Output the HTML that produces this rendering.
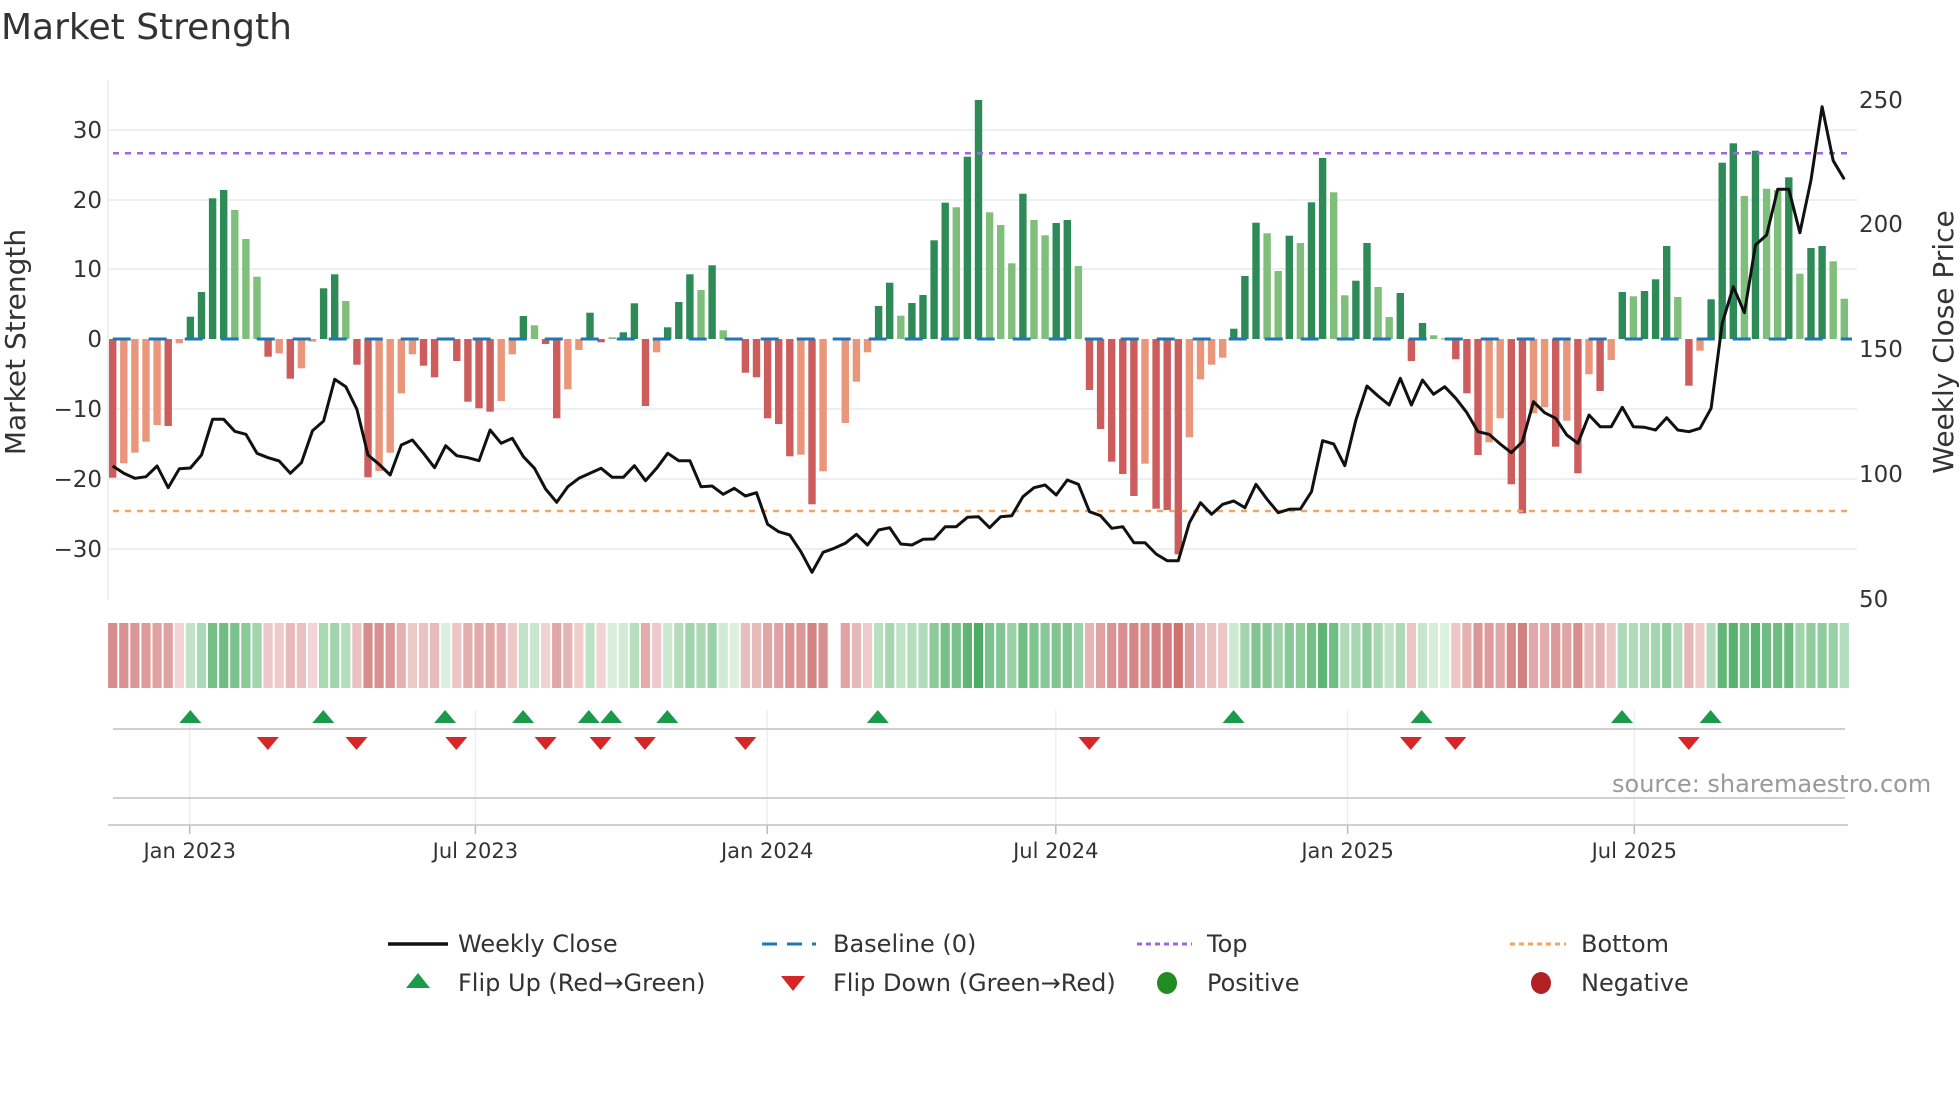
<!DOCTYPE html>
<html><head><meta charset="utf-8"><style>
html,body{margin:0;padding:0;background:#fff;width:1960px;height:1102px;overflow:hidden}
svg{display:block}
text{font-family:"DejaVu Sans","Liberation Sans",sans-serif}
</style></head><body>
<svg id="s" width="1960" height="1102" viewBox="0 0 1960 1102" xmlns="http://www.w3.org/2000/svg">
<text x="1" y="39" font-size="36" fill="#333">Market Strength</text>
<g stroke="#eceff4" stroke-width="2">
<line x1="108" y1="130" x2="1857" y2="130"/><line x1="108" y1="200" x2="1857" y2="200"/><line x1="108" y1="269" x2="1857" y2="269"/>
<line x1="108" y1="409" x2="1857" y2="409"/><line x1="108" y1="479" x2="1857" y2="479"/><line x1="108" y1="549" x2="1857" y2="549"/>
<line x1="108" y1="80" x2="108" y2="600"/>
</g>
<g stroke="#eceff4" stroke-width="1.5">
<line x1="189.7" y1="710" x2="189.7" y2="825"/><line x1="475.4" y1="710" x2="475.4" y2="825"/><line x1="767.2" y1="710" x2="767.2" y2="825"/>
<line x1="1055.8" y1="710" x2="1055.8" y2="825"/><line x1="1347.6" y1="710" x2="1347.6" y2="825"/><line x1="1634.3" y1="710" x2="1634.3" y2="825"/>
</g>
<g font-size="23" fill="#333" text-anchor="end">
<text x="102" y="138">30</text><text x="102" y="208">20</text><text x="102" y="277">10</text><text x="102" y="347">0</text>
<text x="102" y="417">−10</text><text x="102" y="487">−20</text><text x="102" y="557">−30</text>
</g>
<g font-size="23" fill="#333">
<text x="1859" y="108">250</text><text x="1859" y="232">200</text><text x="1859" y="357">150</text><text x="1859" y="482">100</text><text x="1859" y="607">50</text>
</g>
<text transform="translate(25,342) rotate(-90)" font-size="28" fill="#333" text-anchor="middle">Market Strength</text>
<text transform="translate(1953,342) rotate(-90)" font-size="28" fill="#333" text-anchor="middle">Weekly Close Price</text>
<g id="bars"></g>
<g id="base"></g>
<line x1="113" y1="153.3" x2="1852" y2="153.3" stroke="#a066dc" stroke-width="2.5" stroke-dasharray="6 6"/>
<line x1="113" y1="511" x2="1852" y2="511" stroke="#f0a565" stroke-width="2.5" stroke-dasharray="6 6"/>
<polyline id="price" fill="none" stroke="#111" stroke-width="3" stroke-linejoin="round"/>
<g id="strip"></g>
<line x1="113" y1="729" x2="1845" y2="729" stroke="#d0d0d0" stroke-width="2"/>
<line x1="113" y1="798" x2="1845" y2="798" stroke="#d0d0d0" stroke-width="2"/>
<line x1="108" y1="825" x2="1848" y2="825" stroke="#d0d0d0" stroke-width="2"/>
<g stroke="#bbb" stroke-width="1.5">
<line x1="189.7" y1="825" x2="189.7" y2="834"/><line x1="475.4" y1="825" x2="475.4" y2="834"/><line x1="767.2" y1="825" x2="767.2" y2="834"/>
<line x1="1055.8" y1="825" x2="1055.8" y2="834"/><line x1="1347.6" y1="825" x2="1347.6" y2="834"/><line x1="1634.3" y1="825" x2="1634.3" y2="834"/>
</g>
<g id="mk"></g>
<g font-size="21" fill="#333" text-anchor="middle">
<text x="189.7" y="858">Jan 2023</text><text x="475.4" y="858">Jul 2023</text><text x="767.2" y="858">Jan 2024</text>
<text x="1055.8" y="858">Jul 2024</text><text x="1347.6" y="858">Jan 2025</text><text x="1634.3" y="858">Jul 2025</text>
</g>
<text x="1612" y="792" font-size="24" fill="#999">source: sharemaestro.com</text>
<g font-size="24" fill="#333">
<line x1="388" y1="944" x2="448" y2="944" stroke="#111" stroke-width="3.5"/>
<text x="458" y="952">Weekly Close</text>
<line x1="762" y1="944" x2="816" y2="944" stroke="#1f77b4" stroke-width="3" stroke-dasharray="15 10"/>
<text x="833" y="952">Baseline (0)</text>
<line x1="1137" y1="944" x2="1192" y2="944" stroke="#a066dc" stroke-width="3" stroke-dasharray="5 4"/>
<text x="1207" y="952">Top</text>
<line x1="1510" y1="944" x2="1566" y2="944" stroke="#f0a565" stroke-width="3" stroke-dasharray="5 4"/>
<text x="1581" y="952">Bottom</text>
<polygon points="418,973 430,988 406,988" fill="#1a9a4a"/>
<text x="458" y="991">Flip Up (Red→Green)</text>
<polygon points="781,976 805,976 793,991" fill="#d62728"/>
<text x="833" y="991">Flip Down (Green→Red)</text>
<ellipse cx="1167" cy="983" rx="10" ry="11" fill="#228b22"/>
<text x="1207" y="991">Positive</text>
<ellipse cx="1541" cy="983" rx="10" ry="11" fill="#b22222"/>
<text x="1581" y="991">Negative</text>
</g>
</svg>
<script>
(function(){
var NS="http://www.w3.org/2000/svg";
function el(p,t,a){var e=document.createElementNS(NS,t);for(var k in a)e.setAttribute(k,a[k]);p.appendChild(e);return e;}
var B="R1163 O1120 O1088 O1055 O1005 R1008 O760 D680 D606 D325 D300 L360 L447 L560 R800 O790 R866 O835 O755 D595 D553 L633 R824 R1162 O1143 O1088 O910 O793 R827 R862 L743 R813 R935 R955 R965 O933 O793 D678 L706 R762 R985 O898 O780 D668 R757 L742 D727 D640 R948 O787 D712 D636 D553 L600 D526 L721 L745 R848 R862 R985 R1002 R1099 O1094 R1243 O1144 N0 O999 O875 O787 D648 D578 L677 D639 D615 D451 D338 L352 D200 D30 L367 L405 L520 D311 L390 L436 D399 D390 L528 R900 R1017 R1115 R1152 R1218 O1121 R1256 R1260 R1393 O1042 O868 O824 O803 D716 D558 D398 L430 L543 D437 L459 D337 D204 L307 L616 D572 D459 L591 L681 D609 R813 D699 L736 L745 R808 R910 R1095 O1057 O985 R1183 R1270 O970 O952 R1070 O992 R1150 O853 R903 O810 D606 L619 D603 D568 D468 L621 R887 O782 D628 D218 D160 L318 D182 L296 L300 D262 L551 D474 D468 L514 L626".split(" ");
var P=[1128,1150,1165,1160,1128,1193,1136,1134,1095,988,988,1024,1033,1090,1103,1113,1150,1118,1022,993,868,890,958,1095,1123,1155,1065,1050,1090,1133,1067,1097,1103,1112,1020,1060,1045,1100,1135,1197,1237,
1190,1165,1150,1135,1162,1162,1127,1172,1135,1090,1112,1112,1190,1188,1213,1195,1218,1208,1303,1325,1335,1385,1447,1387,1375,1360,1333,1365,1320,1313,1362,1365,1348,1347,1310,1310,1282,1280,1313,1280,1277,
1220,1193,1185,1215,1170,1183,1265,1277,1315,1310,1358,1358,1392,1412,1412,1298,1238,1273,1243,1233,1253,1183,1228,1268,1258,1257,1205,1052,1062,1127,990,888,918,945,865,945,870,913,890,925,
968,1025,1033,1062,1088,1055,935,968,985,1035,1060,975,1010,1010,952,1010,1012,1020,983,1020,1025,1015,955,700,590,668,465,435,298,298,428,270,50,212,268];
var col={D:"#2e8b57",L:"#7fbf7b",R:"#cd5c5c",O:"#e9967a"};
var bars=document.getElementById("bars"),strip=document.getElementById("strip");
function mix(a,b,t){return "rgb("+a.map(function(v,i){return Math.round(v+(b[i]-v)*t)}).join(",")+")";}
var pts=[];
for(var k=0;k<B.length;k++){
 var c=B[k][0],zy=+B[k].slice(1),x=112.7+k*11.1;
 if(c!=="N"){
  var y=90+zy/3,top=Math.min(y,339),h=Math.max(Math.abs(y-339),1.2);
  el(bars,"rect",{x:(x-3.7).toFixed(1),y:top.toFixed(1),width:7.4,height:h.toFixed(1),fill:col[c]});
  var v=(747-zy)/20.94,t=Math.min(Math.abs(v)/32,1),f;
  if(c==="D"||c==="L"||v>0.05) f=mix([222,241,224],[76,172,100],Math.pow(t,0.7));
  else f=mix([244,218,218],[204,110,110],Math.pow(t,0.7));
  el(strip,"rect",{x:(x-4.6).toFixed(1),y:623,width:9.2,height:65,fill:f});
 }
 pts.push(x.toFixed(1)+","+(90+P[k]/3).toFixed(1));
}
document.getElementById("price").setAttribute("points",pts.join(" "));
var base=document.getElementById("base");
for(var x=112.7;x<1852;x+=36){el(base,"line",{x1:x,y1:339,x2:Math.min(x+18,1852),y2:339,stroke:"#1f77b4","stroke-width":3});}
var mk=document.getElementById("mk");
[190.3,323.3,445.1,523.1,588.8,611.2,667.3,877.8,1233.6,1421.6,1622,1710.6].forEach(function(x){
 el(mk,"polygon",{points:x+",710 "+(x+11)+",723 "+(x-11)+",723",fill:"#1a9a4a"});});
[267.8,356.5,456.3,545.6,600.6,644.9,745.3,1089.4,1411,1455.3,1688.8].forEach(function(x){
 el(mk,"polygon",{points:(x-11)+",737 "+(x+11)+",737 "+x+",750",fill:"#d62728"});});
})();
</script>
</body></html>
